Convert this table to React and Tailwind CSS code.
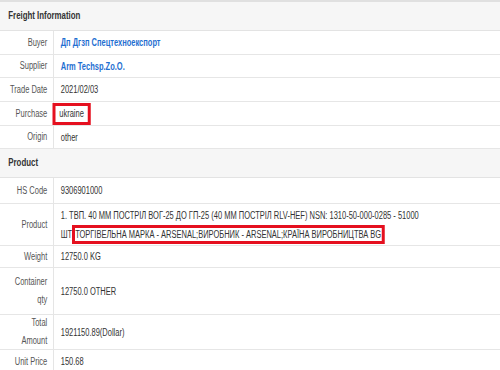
const font = { fontFamily: '"Liberation Sans", Arial, sans-serif' }

// The reference text is condensed, so the sheet is laid out wider and squeezed to 75%.
const freight = [
  { label: ['Buyer'], value: 'Дп Дгзп Спецтехноекспорт', link: true, h: 'h-[24px]' },
  { label: ['Supplier'], value: 'Arm Techsp.Zo.O.', link: true, h: 'h-[23px]' },
  { label: ['Trade Date'], value: '2021/02/03', h: 'h-[24px]' },
  { label: ['Purchase'], value: 'ukraine', boxed: true, h: 'h-[24px]' },
  { label: ['Origin'], value: 'other', h: 'h-[23px]' },
]

function Header({ title, h }) {
  return (
    <div className={`${h} flex items-center pl-[11px] bg-[#f6f6f6] border-b border-[#e3e3e3] text-[10.5px] font-bold text-[#333]`}>
      {title}
    </div>
  )
}

function Row({ label, h, children }) {
  return (
    <div className={`${h} flex border-b border-[#e6e6e6]`}>
      <div className="w-[72px] shrink-0 border-r border-[#dcdcdc] flex flex-col items-end justify-center pr-[8px] text-[10px] leading-[18px] text-[#555] whitespace-nowrap">
        {label.map((l) => (
          <span key={l}>{l}</span>
        ))}
      </div>
      <div className="flex-1 flex items-center pl-[9px] text-[10px] text-[#333]">{children}</div>
    </div>
  )
}

export default function App() {
  return (
    <div style={font} className="w-[500px] h-[370px] overflow-hidden bg-white">
      <div className="w-[667px] origin-top-left scale-x-75 border-t-2 border-[#e0e0e0]">
        <Header title="Freight Information" h="h-[29px]" />
        {freight.map((r) => (
          <Row key={r.label[0]} label={r.label} h={r.h}>
            {r.link ? (
              <span className="font-bold text-[#1f6fd1]">{r.value}</span>
            ) : r.boxed ? (
              <span className="-ml-[11px] border-y-[3px] border-x-[4px] border-[#e5101f] px-[5px] h-[22px] flex items-center">
                {r.value}
              </span>
            ) : (
              r.value
            )}
          </Row>
        ))}
        <Header title="Product" h="h-[29px]" />
        <Row label={['HS Code']} h="h-[26px]">9306901000</Row>
        <Row label={['Product']} h="h-[42px]">
          <div className="leading-[19px] pt-[1px]">
            <div>1. ТВП. 40 ММ ПОСТРІЛ ВОГ-25 ДО ГП-25 (40 ММ ПОСТРІЛ RLV-HEF) NSN: 1310-50-000-0285 - 51000</div>
            <div className="flex items-center">
              ШТ
              <span className="border-y-[3px] border-x-[4px] border-[#e5101f] leading-[13px] pr-[1px]">
                ТОРГІВЕЛЬНА МАРКА - ARSENAL;ВИРОБНИК - ARSENAL;КРАЇНА ВИРОБНИЦТВА BG
              </span>
            </div>
          </div>
        </Row>
        <Row label={['Weight']} h="h-[22px]">12750.0 KG</Row>
        <Row label={['Container', 'qty']} h="h-[47px]">12750.0 OTHER</Row>
        <Row label={['Total', 'Amount']} h="h-[35px]">1921150.89(Dollar)</Row>
        <Row label={['Unit Price']} h="h-[24px]">150.68</Row>
      </div>
    </div>
  )
}
